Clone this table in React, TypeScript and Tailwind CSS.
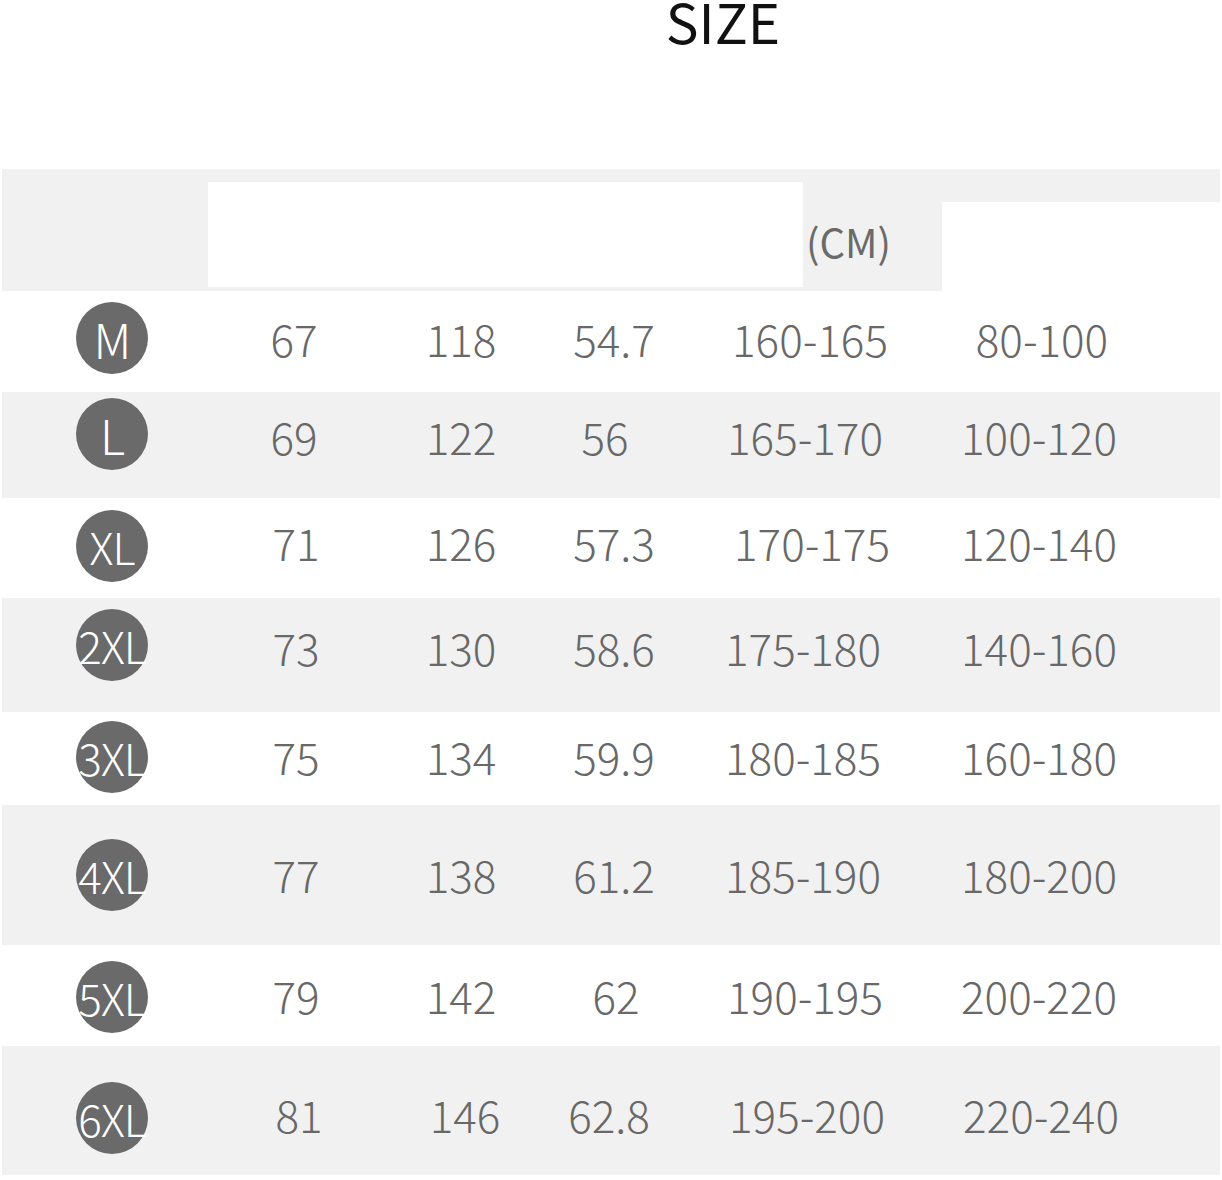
const rows = [
  { size: "M", bg: "bg-white", h: "h-[101px]", pt: "pt-[15px]", dot: "-mt-[4px]", big: true, cells: ["67", "118", "54.7", "160-165", "80-100"], shift: ["-translate-x-[2px]", "", "", "translate-x-[5px]", "translate-x-[3px]"] },
  { size: "L", bg: "bg-[#f1f1f1]", h: "h-[106px]", pt: "pt-[12px]", dot: "-mt-[6px]", big: true, cells: ["69", "122", "56", "165-170", "100-120"], shift: ["-translate-x-[2px]", "", "-translate-x-[9px]", "", ""] },
  { size: "XL", bg: "bg-white", h: "h-[100px]", pt: "pt-[12px]", dot: "", big: false, cells: ["71", "126", "57.3", "170-175", "120-140"], shift: ["", "", "", "translate-x-[7px]", ""] },
  { size: "2XL", bg: "bg-[#f1f1f1]", h: "h-[114px]", pt: "pt-[17px]", dot: "-mt-[6px]", big: false, cells: ["73", "130", "58.6", "175-180", "140-160"], shift: ["", "", "", "-translate-x-[2px]", ""] },
  { size: "3XL", bg: "bg-white", h: "h-[93px]", pt: "pt-[12px]", dot: "-mt-[3px]", big: false, cells: ["75", "134", "59.9", "180-185", "160-180"], shift: ["", "", "", "-translate-x-[2px]", ""] },
  { size: "4XL", bg: "bg-[#f1f1f1]", h: "h-[140px]", pt: "pt-[37px]", dot: "-mt-[3px]", big: false, cells: ["77", "138", "61.2", "185-190", "180-200"], shift: ["", "", "", "-translate-x-[2px]", ""] },
  { size: "5XL", bg: "bg-white", h: "h-[101px]", pt: "pt-[18px]", dot: "-mt-[2px]", big: false, cells: ["79", "142", "62", "190-195", "200-220"], shift: ["", "", "translate-x-[2px]", "", ""] },
  { size: "6XL", bg: "bg-[#f1f1f1]", h: "h-[129px]", pt: "pt-[36px]", dot: "", big: false, cells: ["81", "146", "62.8", "195-200", "220-240"], shift: ["translate-x-[3px]", "translate-x-[4px]", "-translate-x-[5px]", "translate-x-[2px]", "translate-x-[2px]"] },
]

function SizeDot({ label, big, className }: { label: string; big: boolean; className: string }) {
  return (
    <div className={`flex justify-center ${className}`}>
      <div className="w-[72px] h-[72px] rounded-full bg-[#6a6a6a] flex items-center justify-center">
        <span
          className={`text-white font-light leading-[64px] tracking-[-1px] whitespace-nowrap ${big ? "text-[48px]" : "text-[44px]"}`}
        >
          {label}
        </span>
      </div>
    </div>
  )
}

export default function App() {
  return (
    <div className="w-[1222px] h-[1180px] bg-white overflow-hidden font-['Noto_Sans_CJK_SC','Noto_Sans',sans-serif]">
      {/* title */}
      <div className="h-[169px] flex flex-col">
        <h1 className="ml-[573px] w-[300px] text-center text-[55px] leading-[40px] text-[#111]">SIZE</h1>
      </div>

      {/* header band */}
      <div className="ml-[2px] w-[1218px] h-[122px] flex">
        <div className="w-[940px] bg-[#f1f1f1] flex">
          <div className="w-[206px]" />
          <div className="w-[595px] h-[105px] mt-[13px] bg-white" />
          <div className="flex-1 pl-[3px] pt-[50px]">
            <span className="text-[40px] leading-[44px] text-[#6a6a6a]">(CM)</span>
          </div>
        </div>
        <div className="flex-1 flex flex-col">
          <div className="h-[33px] bg-[#f1f1f1]" />
          <div className="flex-1 bg-white" />
        </div>
      </div>

      {/* size rows */}
      {rows.map((row) => (
        <div
          key={row.size}
          className={`ml-[2px] w-[1218px] grid grid-cols-[220px_148px_182px_124px_258px_210px_1fr] items-start ${row.bg} ${row.h} ${row.pt}`}
        >
          <SizeDot label={row.size} big={row.big} className={row.dot} />
          {row.cells.map((value, i) => (
            <div key={i} className={`text-center font-light text-[44px] leading-[64px] text-[#686868] whitespace-nowrap ${row.shift[i]}`}>
              {value}
            </div>
          ))}
        </div>
      ))}
    </div>
  )
}
